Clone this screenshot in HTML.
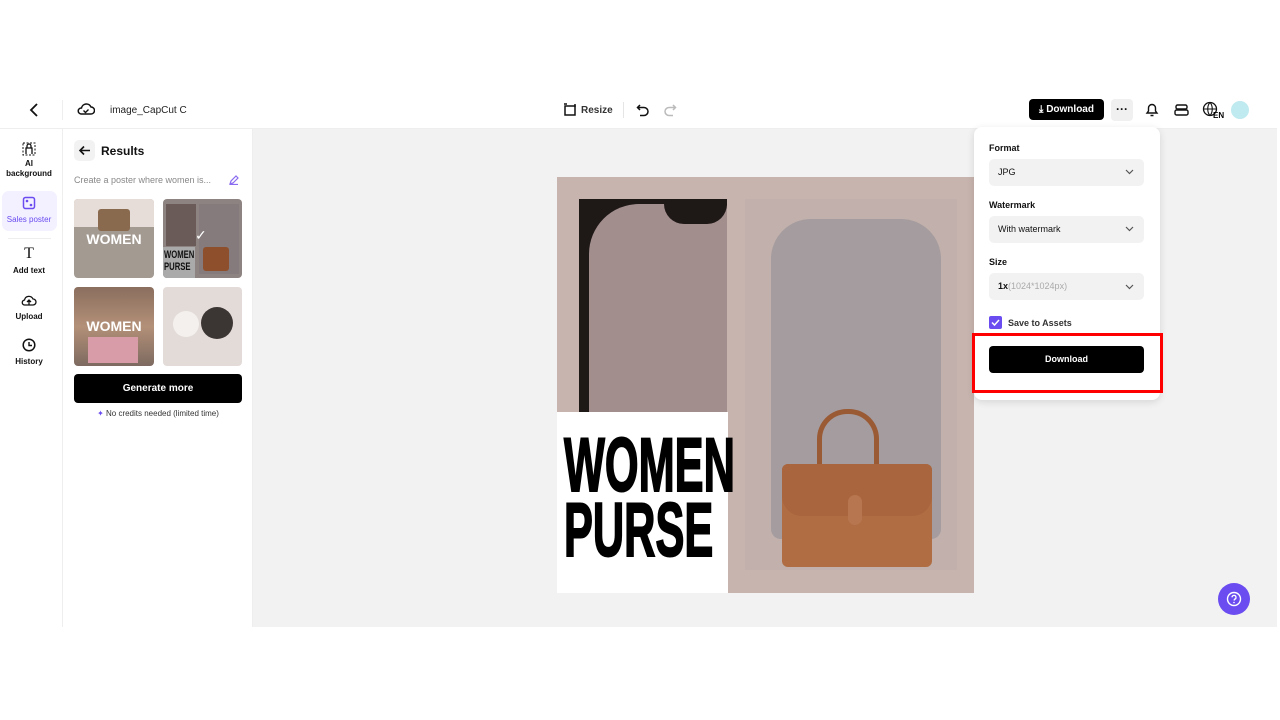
<!DOCTYPE html>
<html><head><meta charset="utf-8"><style>
*{margin:0;padding:0;box-sizing:border-box}
body{width:1280px;height:720px;background:#fff;font-family:"Liberation Sans",sans-serif;position:relative;overflow:hidden;color:#111}
.a{position:absolute}
.b{font-weight:bold}
</style></head><body>
<!-- header -->
<div class="a" style="left:0;top:91px;width:1277px;height:38px;border-bottom:1px solid #eee;background:#fff"></div>
<svg class="a" style="left:27px;top:102px" width="14" height="16"><path d="M10 2L4 8l6 6" stroke="#111" stroke-width="1.8" fill="none"/></svg>
<div class="a" style="left:62px;top:100px;width:1px;height:20px;background:#eee"></div>
<svg class="a" style="left:77px;top:101px" width="18" height="16"><path d="M4 13h10a3.5 3.5 0 0 0 0-7 5 5 0 0 0-9.5 1A3 3 0 0 0 4 13z" stroke="#111" stroke-width="1.5" fill="none"/><path d="M6.5 9.5l2 2 3-3" stroke="#111" stroke-width="1.4" fill="none"/></svg>
<div class="a" style="left:110px;top:105px;font-size:10px;color:#222">image_CapCut C</div>
<svg class="a" style="left:563px;top:103px" width="14" height="14"><rect x="2" y="3" width="10" height="9" stroke="#111" stroke-width="1.5" fill="none"/><path d="M1 1h3M12 1v3" stroke="#111" stroke-width="1.5"/></svg>
<div class="a b" style="left:581px;top:105px;font-size:10px;color:#333">Resize</div>
<div class="a" style="left:623px;top:102px;width:1px;height:16px;background:#e5e5e5"></div>
<svg class="a" style="left:636px;top:103px" width="14" height="14"><path d="M4 2L1.5 4.5 4 7M2 4.5h6a4 4 0 0 1 0 8H4" stroke="#111" stroke-width="1.5" fill="none"/></svg>
<svg class="a" style="left:663px;top:103px" width="14" height="14"><path d="M10 2l2.5 2.5L10 7M12 4.5H6a4 4 0 0 0 0 8h4" stroke="#bbb" stroke-width="1.5" fill="none"/></svg>
<div class="a b" style="left:1029px;top:99px;width:75px;height:21px;background:#000;border-radius:4px;color:#fff;font-size:10px;line-height:21px;text-align:center">⤓ Download</div>
<div class="a" style="left:1111px;top:99px;width:22px;height:22px;background:#f0f0f0;border-radius:4px;font-size:12px;text-align:center;line-height:20px;font-weight:bold">···</div>
<svg class="a" style="left:1144px;top:101px" width="16" height="17"><path d="M3 12h10l-1.5-2V7a3.5 3.5 0 0 0-7 0v3z M6.5 14.5h3" stroke="#111" stroke-width="1.4" fill="none"/></svg>
<svg class="a" style="left:1174px;top:103px" width="15" height="14"><rect x="2" y="2" width="11" height="4" rx="1.5" stroke="#111" stroke-width="1.4" fill="none"/><rect x="1" y="7" width="13" height="5" rx="1.5" stroke="#111" stroke-width="1.4" fill="none"/></svg>
<svg class="a" style="left:1202px;top:101px" width="22" height="18"><circle cx="8" cy="8" r="6.5" stroke="#111" stroke-width="1.3" fill="none"/><path d="M1.5 8h13M8 1.5c-3 3-3 10 0 13M8 1.5c3 3 3 10 0 13" stroke="#111" stroke-width="1.1" fill="none"/><text x="11" y="17" font-size="8" font-weight="bold" font-family="Liberation Sans">EN</text></svg>
<div class="a" style="left:1231px;top:101px;width:18px;height:18px;border-radius:50%;background:#bfeaf0"></div>
<!-- sidebar -->
<div class="a" style="left:62px;top:129px;width:1px;height:498px;background:#eee"></div>
<div class="a" style="left:252px;top:129px;width:1px;height:498px;background:#eee"></div>
<svg class="a" style="left:22px;top:140px" width="14" height="16"><rect x="1" y="3" width="12" height="12" stroke="#111" stroke-dasharray="2 1.5" fill="none"/><path d="M4 14V8h6v6M5 8V6a2 2 0 0 1 4 0v2" stroke="#111" stroke-width="1.3" fill="none"/></svg>
<div class="a b" style="left:0;top:159px;width:58px;font-size:8px;text-align:center;line-height:10px">AI<br>background</div>
<div class="a" style="left:2px;top:191px;width:55px;height:40px;background:#f3f0ff;border-radius:7px"></div>
<svg class="a" style="left:22px;top:196px" width="14" height="14"><rect x="1.5" y="1.5" width="11" height="11" rx="2" stroke="#6a4cf0" stroke-width="1.5" fill="none"/><circle cx="5" cy="5" r="1.3" fill="#6a4cf0"/><circle cx="9" cy="9" r="1.3" fill="#6a4cf0"/></svg>
<div class="a" style="left:0;top:215px;width:58px;font-size:8px;text-align:center;color:#6a4cf0">Sales poster</div>
<div class="a" style="left:8px;top:238px;width:43px;height:1px;background:#eee"></div>
<div class="a" style="left:0;top:245px;width:58px;text-align:center;font-family:'Liberation Serif';font-size:16px">T</div>
<div class="a b" style="left:0;top:266px;width:58px;font-size:8px;text-align:center">Add text</div>
<svg class="a" style="left:21px;top:293px" width="16" height="14"><path d="M4 12h8a3 3 0 0 0 0-6 4.5 4.5 0 0 0-8.5 1A2.5 2.5 0 0 0 4 12zM8 12V7M6 9l2-2 2 2" stroke="#111" stroke-width="1.3" fill="none"/></svg>
<div class="a b" style="left:0;top:312px;width:58px;font-size:8px;text-align:center">Upload</div>
<svg class="a" style="left:22px;top:338px" width="14" height="14"><circle cx="7" cy="7" r="5.8" stroke="#111" stroke-width="1.5" fill="none"/><path d="M7 4v3.5h3" stroke="#111" stroke-width="1.4" fill="none"/></svg>
<div class="a b" style="left:0;top:357px;width:58px;font-size:8px;text-align:center">History</div>
<!-- panel -->
<div class="a" style="left:74px;top:140px;width:21px;height:21px;background:#f2f2f2;border-radius:5px"></div>
<svg class="a" style="left:78px;top:144px" width="13" height="13"><path d="M12 6.5H2M6 2.5l-4 4 4 4" stroke="#111" stroke-width="1.6" fill="none"/></svg>
<div class="a b" style="left:101px;top:144px;font-size:12px">Results</div>
<div class="a" style="left:74px;top:175px;font-size:9px;color:#888">Create a poster where women is...</div>
<svg class="a" style="left:229px;top:175px" width="10" height="10"><path d="M1 9l1-3 5-5 2 2-5 5zM1 9.5h8" stroke="#8a6cf0" stroke-width="1.2" fill="none"/></svg>
<div class="a" style="left:74px;top:199px;width:80px;height:79px;border-radius:4px;background:#a39a92;overflow:hidden">
 <div class="a" style="left:0;top:0;width:80px;height:28px;background:#e6ddd8"></div>
 <div class="a" style="left:24px;top:10px;width:32px;height:22px;background:#8a6a4f;border-radius:3px"></div>
 <div class="a b" style="left:0;top:32px;width:80px;text-align:center;color:#fff;font-size:14px">WOMEN</div></div>
<div class="a" style="left:163px;top:199px;width:79px;height:79px;border-radius:4px;background:#8d8380;overflow:hidden">
 <div class="a" style="left:3px;top:5px;width:30px;height:42px;background:#6a5a58"></div>
 <div class="a" style="left:36px;top:5px;width:40px;height:70px;background:#857b7c"></div>
 <div class="a" style="left:40px;top:48px;width:26px;height:24px;background:#8e4f2c;border-radius:3px"></div>
 <div class="a" style="left:0;top:48px;width:32px;height:31px;background:#aaa"></div>
 <div class="a b" style="left:1px;top:50px;font-size:11px;line-height:12px;transform:scaleX(.7);transform-origin:left">WOMEN<br>PURSE</div>
 <div class="a" style="left:32px;top:28px;color:#fff;font-size:14px">✓</div></div>
<div class="a" style="left:74px;top:287px;width:80px;height:79px;border-radius:4px;background:linear-gradient(#8a6e5e,#b39078 50%,#7d6a60);overflow:hidden">
 <div class="a b" style="left:0;top:31px;width:80px;text-align:center;color:#fff;font-size:14px">WOMEN</div>
 <div class="a" style="left:14px;top:50px;width:50px;height:26px;background:#d89ca8"></div></div>
<div class="a" style="left:163px;top:287px;width:79px;height:79px;border-radius:4px;background:#e3dbd8;overflow:hidden">
 <div class="a" style="left:10px;top:24px;width:26px;height:26px;border-radius:50%;background:#f3f0ee"></div>
 <div class="a" style="left:38px;top:20px;width:32px;height:32px;border-radius:50%;background:#3b3534"></div></div>
<div class="a b" style="left:74px;top:374px;width:168px;height:29px;background:#000;border-radius:4px;color:#fff;font-size:10px;text-align:center;line-height:29px">Generate more</div>
<div class="a" style="left:74px;top:409px;width:168px;text-align:center;font-size:8px;color:#333"><span style="color:#6a4cf0">✦</span> No credits needed (limited time)</div>
<!-- canvas -->
<div class="a" style="left:253px;top:129px;width:1024px;height:498px;background:#f2f2f2"></div>
<div class="a" style="left:557px;top:177px;width:417px;height:416px;background:#c8b4ae;overflow:hidden">
 <div class="a" style="left:22px;top:22px;width:148px;height:213px;background:#1e1816;overflow:hidden">
  <div class="a" style="left:10px;top:5px;width:150px;height:230px;border-radius:50px 20px 0 0;background:#a38e8e"></div>
  <div class="a" style="left:85px;top:0;width:63px;height:25px;background:#1e1816;border-radius:0 0 20px 20px"></div>
 </div>
 <div class="a" style="left:188px;top:22px;width:212px;height:371px;background:#c1b0ab">
  <div class="a" style="left:26px;top:20px;width:170px;height:320px;border-radius:40px 40px 10px 10px;background:#a59c9f"></div>
  <div class="a" style="left:37px;top:210px;width:150px;height:158px">
   <div class="a" style="left:35px;top:0;width:62px;height:60px;border:5px solid #9a5a34;border-bottom:none;border-radius:30px 30px 0 0"></div>
   <div class="a" style="left:0;top:55px;width:150px;height:103px;background:#b06d43;border-radius:6px"></div>
   <div class="a" style="left:0;top:55px;width:150px;height:52px;background:#a8653e;border-radius:6px 6px 20px 20px"></div>
   <div class="a" style="left:66px;top:86px;width:14px;height:30px;background:#b87650;border-radius:7px"></div></div>
 </div>
 <div class="a" style="left:0;top:235px;width:171px;height:181px;background:#fff"></div>
 <div class="a b" style="left:7px;top:256px;font-size:76px;line-height:65px;transform:scaleX(.57);transform-origin:left top;letter-spacing:0px;color:#000;-webkit-text-stroke:2px #000;font-family:'Liberation Sans Narrow','Liberation Sans',sans-serif">WOMEN<br>PURSE</div>
</div>
<!-- dropdown -->
<div class="a" style="left:974px;top:127px;width:186px;height:273px;background:#fff;border-radius:8px;box-shadow:0 2px 8px rgba(0,0,0,.12)"></div>
<div class="a b" style="left:989px;top:143px;font-size:9px">Format</div>
<div class="a" style="left:989px;top:159px;width:155px;height:27px;background:#f2f2f2;border-radius:5px;font-size:9px;line-height:27px;padding-left:9px">JPG</div>
<div class="a b" style="left:989px;top:200px;font-size:9px">Watermark</div>
<div class="a" style="left:989px;top:216px;width:155px;height:27px;background:#f2f2f2;border-radius:5px;font-size:9px;line-height:27px;padding-left:9px">With watermark</div>
<div class="a b" style="left:989px;top:257px;font-size:9px">Size</div>
<div class="a" style="left:989px;top:273px;width:155px;height:27px;background:#f2f2f2;border-radius:5px;font-size:9px;line-height:27px;padding-left:9px"><b>1x</b><span style="color:#aaa">(1024*1024px)</span></div>
<svg class="a" style="left:1125px;top:169px" width="9" height="6"><path d="M1 1l3.5 3.5L8 1" stroke="#555" stroke-width="1.2" fill="none"/></svg>
<svg class="a" style="left:1125px;top:226px" width="9" height="6"><path d="M1 1l3.5 3.5L8 1" stroke="#555" stroke-width="1.2" fill="none"/></svg>
<svg class="a" style="left:1125px;top:284px" width="9" height="6"><path d="M1 1l3.5 3.5L8 1" stroke="#555" stroke-width="1.2" fill="none"/></svg>
<div class="a" style="left:989px;top:316px;width:13px;height:13px;background:#6a4cf0;border-radius:2px"></div>
<svg class="a" style="left:990px;top:317px" width="11" height="11"><path d="M2 5.5l2.5 2.5L9 3" stroke="#fff" stroke-width="1.5" fill="none"/></svg>
<div class="a b" style="left:1008px;top:318px;font-size:9px;color:#333">Save to Assets</div>
<div class="a b" style="left:989px;top:346px;width:155px;height:27px;background:#000;border-radius:4px;color:#fff;font-size:9px;text-align:center;line-height:27px">Download</div>
<div class="a" style="left:972px;top:333px;width:191px;height:60px;border:3px solid #f00"></div>
<!-- help -->
<div class="a" style="left:1218px;top:583px;width:32px;height:32px;border-radius:50%;background:#6a4cf0"></div>
<svg class="a" style="left:1226px;top:591px" width="16" height="16"><circle cx="8" cy="8" r="6.5" stroke="#fff" stroke-width="1.4" fill="none"/><path d="M6 6.3a2 2 0 1 1 2.5 2L8 9.5" stroke="#fff" stroke-width="1.3" fill="none"/><circle cx="8" cy="11.5" r=".8" fill="#fff"/></svg>
</body></html>
